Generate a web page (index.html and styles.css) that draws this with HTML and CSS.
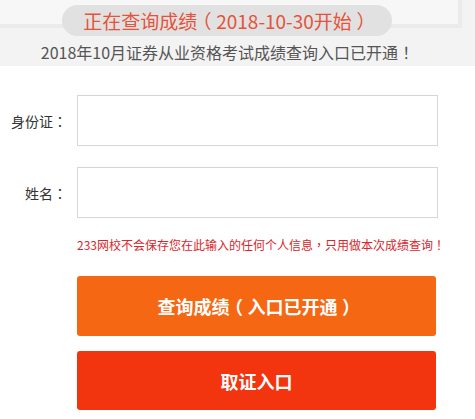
FILE: index.html
```html
<!DOCTYPE html>
<html lang="zh-CN">
<head>
<meta charset="utf-8">
<title>成绩查询</title>
<link rel="stylesheet" href="styles.css">
</head>
<body>
<div class="header">
  <div class="frame"></div>
  <div class="pill">正在查询成绩<span class="p paren">（</span>2018-10-30开始<span class="p paren">）</span></div>
  <div class="subtitle">2018年10月证券从业资格考试成绩查询入口已开通<span class="p" lang="zh-TW">！</span></div>
</div>
<form class="form">
  <div class="row">
    <label class="label">身份证<span class="p" lang="zh-TW">：</span></label>
    <input class="field" type="text">
  </div>
  <div class="row row-gap">
    <label class="label">姓名<span class="p" lang="zh-TW">：</span></label>
    <input class="field" type="text">
  </div>
  <p class="note">233网校不会保存您在此输入的任何个人信息<span class="p" lang="zh-TW">，</span>只用做本次成绩查询<span class="p" lang="zh-TW">！</span></p>
  <button class="btn btn-query" type="button">查询成绩<span class="p paren">（</span>入口已开通<span class="p paren">）</span></button>
  <button class="btn btn-cert" type="button">取证入口</button>
</form>
</body>
</html>
```
FILE: styles.css
```css
* { box-sizing: border-box; }
body {
  margin: 0;
  background: #fff;
  font-family: "Microsoft YaHei", "Noto Sans CJK SC", "Noto Sans", sans-serif;
  width: 475px;
  overflow: hidden;
}
.p {
  font-family: "Noto Sans CJK TC", "Noto Sans CJK SC", sans-serif;
}
.paren {
  font-feature-settings: "halt" 1;
  padding: 0 0.25em;
}
.header {
  position: relative;
  height: 66px;
  background: #f3f3f3;
  padding-top: 5px;
  overflow: hidden;
}
.frame {
  position: absolute;
  left: -10px;
  top: -10px;
  width: 472px;
  height: 38px;
  border: 4px solid #ebebeb;
  background: #f7f7f7;
}
.pill {
  position: relative;
  margin-left: 62px;
  width: 330px;
  height: 31px;
  border-radius: 16px;
  background: #e1e1e1;
  color: #e4533a;
  font-size: 19px;
  line-height: 31px;
  text-align: center;
  white-space: nowrap;
}
.subtitle {
  position: relative;
  margin-top: 6px;
  width: 455px;
  text-align: center;
  color: #555;
  font-size: 16px;
  line-height: 20px;
  white-space: nowrap;
}
.form {
  display: flex;
  flex-direction: column;
  padding-top: 29px;
}
.row {
  display: flex;
  align-items: center;
  gap: 10px;
}
.row-gap { margin-top: 21px; }
.label {
  width: 67px;
  text-align: right;
  font-size: 14px;
  color: #333;
  white-space: nowrap;
}
.field {
  width: 361px;
  height: 51px;
  border: 1px solid #d6d6d6;
  background: #fff;
  margin: 0;
  outline: none;
}
.note {
  margin: 20px 0 0 77px;
  font-size: 12px;
  line-height: 14px;
  color: #d8262c;
  white-space: nowrap;
}
.btn {
  margin-left: 77px;
  width: 359px;
  border: none;
  border-radius: 3px;
  color: #fff;
  font-family: inherit;
  font-size: 18px;
  font-weight: bold;
  padding: 0;
}
.btn-query {
  margin-top: 24px;
  height: 60px;
  background: #f56712;
}
.btn-cert {
  margin-top: 15px;
  height: 59px;
  background: #f3350f;
}
```
